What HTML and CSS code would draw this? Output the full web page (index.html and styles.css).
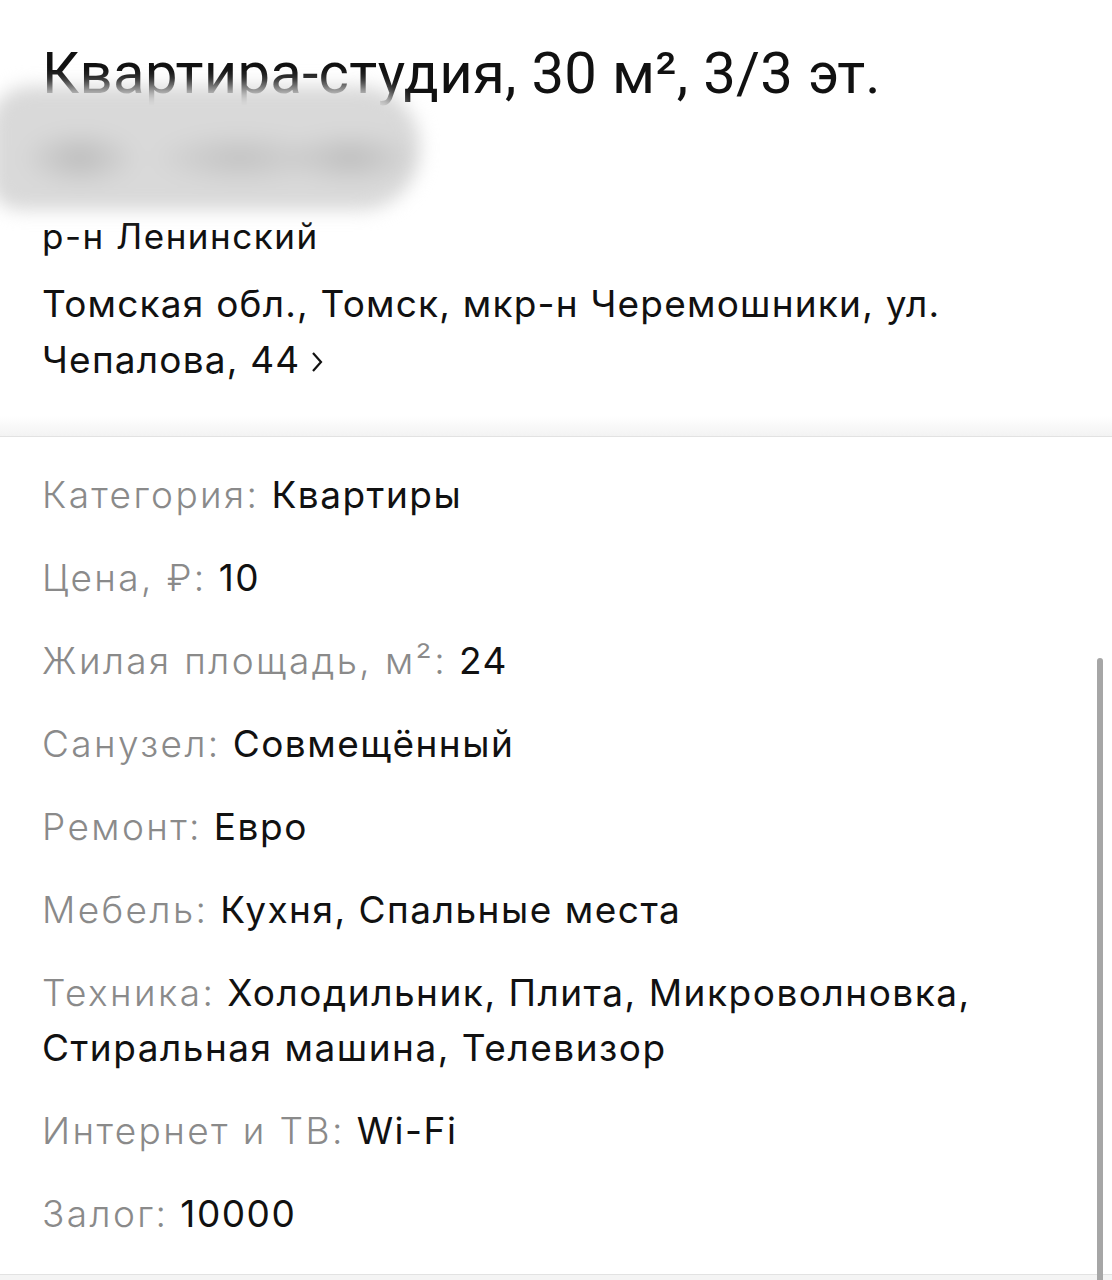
FILE: index.html
```html
<!DOCTYPE html>
<html lang="ru">
<head>
    <meta charset="UTF-8">
    <meta name="viewport" content="width=device-width, initial-scale=1.0">
    <title>Квартира-студия, 30 м², 3/3 эт.</title>
    <link rel="stylesheet" href="styles.css">
</head>
<body>
    <div class="page">
        <div class="head">
            <h1 class="title">Квартира-студия, 30 м², 3/3 эт.</h1>
            <div class="hidden-line"></div>
            <div class="blur"></div>
            <div class="district">р-н Ленинский</div>
            <div class="address">Томская обл., Томск, мкр-н Черемошники, ул. Чепалова, 44<svg class="arrow" width="14" height="24" viewBox="0 0 14 24"><path d="M3 3 L11 12 L3 21" fill="none" stroke="#111" stroke-width="2.2"/></svg></div>
        </div>

        <div class="divider"></div>

        <div class="params">
            <div class="row"><span class="label">Категория:</span> Квартиры</div>
            <div class="row"><span class="label">Цена, ₽:</span> 10</div>
            <div class="row"><span class="label">Жилая площадь, м²:</span> 24</div>
            <div class="row"><span class="label">Санузел:</span> Совмещённый</div>
            <div class="row"><span class="label">Ремонт:</span> Евро</div>
            <div class="row"><span class="label">Мебель:</span> Кухня, Спальные места</div>
            <div class="row"><span class="label">Техника:</span> Холодильник, Плита, Микроволновка, Стиральная машина, Телевизор</div>
            <div class="row"><span class="label">Интернет и ТВ:</span> Wi-Fi</div>
            <div class="row"><span class="label">Залог:</span> 10000</div>
        </div>

        <div class="bottom"></div>
        <div class="scrollbar"></div>
    </div>
</body>
</html>
```

FILE: styles.css
```css
body {
    margin: 0;
    background-color: #fff;
    font-family: Inter, Roboto, "Noto Sans", sans-serif;
    color: #111;
}
.page {
    position: relative;
    width: 1112px;
    min-height: 1280px;
    overflow: hidden;
}
.head {
    position: relative;
    padding: 39px 40px 28px 42px;
}
.title {
    margin: 0;
    font-family: Roboto, "Noto Sans", sans-serif;
    font-size: 58px;
    font-weight: 400;
    line-height: 68px;
    letter-spacing: 0.3px;
    color: #111;
}
.hidden-line {
    height: 104px;
}
.blur {
    position: absolute;
    left: -10px;
    top: 86px;
    width: 430px;
    height: 124px;
    border-radius: 40px 60px 60px 30px;
    background:
        radial-gradient(ellipse 60px 30px at 90px 72px, #bcbcbc, transparent),
        radial-gradient(ellipse 90px 28px at 250px 72px, #c2c2c2, transparent),
        radial-gradient(ellipse 70px 28px at 360px 72px, #bdbdbd, transparent),
        #d9d9d9;
    filter: blur(9px);
}
.district {
    font-size: 35px;
    line-height: 50px;
    letter-spacing: 1.5px;
    margin-bottom: 15px;
}
.address {
    font-size: 37px;
    line-height: 56px;
    letter-spacing: 1.2px;
    padding-right: 110px;
}
.arrow {
    margin-left: 10px;
    vertical-align: -1px;
}
.divider {
    height: 20px;
    background: linear-gradient(#fff, #f3f3f3);
    border-bottom: 1px solid #e2e2e2;
}
.params {
    padding: 30px 60px 33px 42px;
}
.row {
    font-size: 37px;
    line-height: 55px;
    margin-bottom: 28px;
    letter-spacing: 1.5px;
    color: #111;
}
.row:last-child {
    margin-bottom: 0;
}
.label {
    color: #8a8a8a;
    font-weight: 300;
    letter-spacing: 2.4px;
}
.bottom {
    border-top: 1px solid #e2e2e2;
    background-color: #f4f4f4;
    height: 20px;
}
.scrollbar {
    position: absolute;
    left: 1097px;
    top: 658px;
    width: 6px;
    height: 640px;
    border-radius: 3px;
    background-color: #a6a6a6;
}
```
